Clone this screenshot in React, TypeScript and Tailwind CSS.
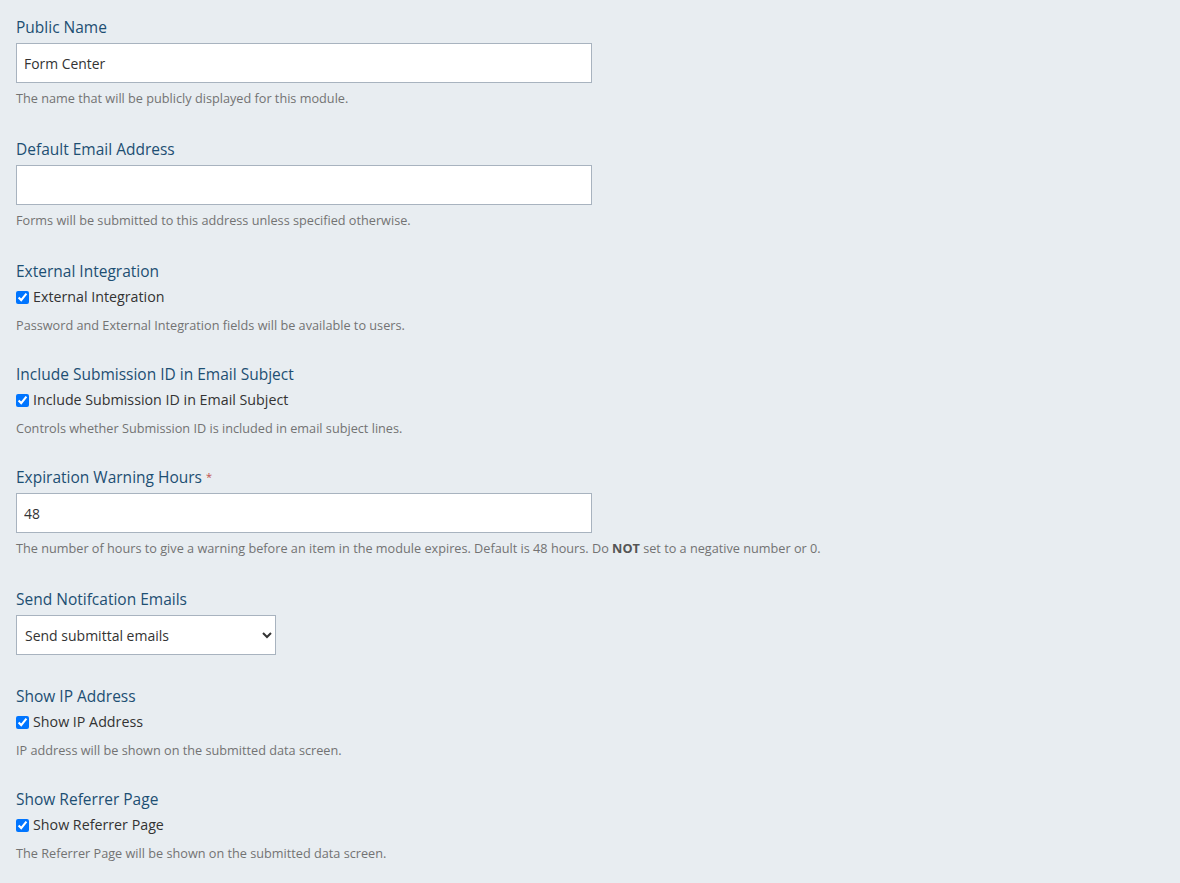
const font = { fontFamily: "'Open Sans', 'Noto Sans', sans-serif" };

function Label({ children, required }: { children: React.ReactNode; required?: boolean }) {
  return (
    <div className="text-[15.5px] leading-5 text-[#1d4f73]">
      {children}
      {required && <span className="ml-1 text-[11px] align-top text-[#c0504d]">*</span>}
    </div>
  );
}

function Help({ children }: { children: React.ReactNode }) {
  return <div className="text-[12.7px] leading-[18px] text-[#737373]">{children}</div>;
}

function TextField({ label, value, help, required }: { label: string; value: string; help: React.ReactNode; required?: boolean }) {
  return (
    <div className="mb-8">
      <Label required={required}>{label}</Label>
      <input
        defaultValue={value}
        className="mt-1.5 block h-10 w-[576px] border border-[#a8b3bf] bg-white px-[7px] text-[13.9px] text-[#333] outline-none"
        style={font}
      />
      <div className="mt-1.5">
        <Help>{help}</Help>
      </div>
    </div>
  );
}

function CheckField({ label, help }: { label: string; help: string }) {
  return (
    <div className="mb-[30px]">
      <Label>{label}</Label>
      <label className="mt-1.5 flex h-5 items-center gap-1 text-[14.25px] text-[#333]">
        <input type="checkbox" defaultChecked className="m-0 h-[13px] w-[13px] accent-[#0075ff]" />
        {label}
      </label>
      <div className="mt-[9px]">
        <Help>{help}</Help>
      </div>
    </div>
  );
}

export default function App() {
  return (
    <div className="min-h-[883px] w-full bg-[#e8edf1] px-4 pt-[17px]" style={font}>
      <TextField label="Public Name" value="Form Center" help="The name that will be publicly displayed for this module." />
      <TextField label="Default Email Address" value="" help="Forms will be submitted to this address unless specified otherwise." />
      <CheckField label="External Integration" help="Password and External Integration fields will be available to users." />
      <CheckField label="Include Submission ID in Email Subject" help="Controls whether Submission ID is included in email subject lines." />
      <TextField
        label="Expiration Warning Hours"
        required
        value="48"
        help={
          <>
            The number of hours to give a warning before an item in the module expires. Default is 48 hours. Do{" "}
            <b className="font-bold text-[#555]">NOT</b> set to a negative number or 0.
          </>
        }
      />
      <div className="mb-[31px]">
        <Label>Send Notifcation Emails</Label>
        <select
          defaultValue="submittal"
          className="mt-1.5 block h-10 w-[260px] border border-[#a8b3bf] bg-white px-1 text-[14px] text-[#333] outline-none"
          style={font}
        >
          <option value="submittal">Send submittal emails</option>
          <option value="none">Do not send emails</option>
        </select>
      </div>
      <CheckField label="Show IP Address" help="IP address will be shown on the submitted data screen." />
      <CheckField label="Show Referrer Page" help="The Referrer Page will be shown on the submitted data screen." />
    </div>
  );
}
